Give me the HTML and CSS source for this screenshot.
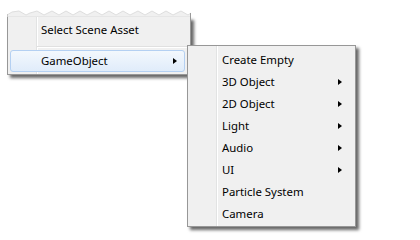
FILE: index.html
```html
<!DOCTYPE html>
<html>
<head>
<meta charset="utf-8">
<link rel="stylesheet" href="styles.css">
</head>
<body>
<div class="desk">
  <div class="menu1">
    <svg class="torn" width="184" height="7" viewBox="0 0 184 7">
      <polygon points="0,7 0,5 5,2 12,1 19,5 23,3 30,1 37,5 45,1 52,5 59,1 66,5 73,1 80,5 88,1 95,5 102,1 109,5 116,1 123,5 131,1 138,5 145,1 152,5 159,1 166,5 174,1 181,5 184,3 184,7" fill="#f0f0f0" stroke="#dedede" stroke-width="1"/>
      <line x1="0.5" y1="4" x2="0.5" y2="7" stroke="#c8c8c8"/>
      <line x1="183.5" y1="3" x2="183.5" y2="7" stroke="#9a9a9a"/>
    </svg>
    <div class="body1">
      <div class="item"><span class="label">Select Scene Asset</span></div>
      <div class="sep"></div>
      <div class="item hot"><span class="label">GameObject</span><span class="arrow"></span></div>
    </div>
  </div>
  <div class="menu2">
    <div class="item"><span class="label">Create Empty</span></div>
    <div class="item"><span class="label">3D Object</span><span class="arrow"></span></div>
    <div class="item"><span class="label">2D Object</span><span class="arrow"></span></div>
    <div class="item"><span class="label">Light</span><span class="arrow"></span></div>
    <div class="item"><span class="label">Audio</span><span class="arrow"></span></div>
    <div class="item"><span class="label">UI</span><span class="arrow"></span></div>
    <div class="item"><span class="label">Particle System</span></div>
    <div class="item"><span class="label">Camera</span></div>
  </div>
</div>
</body>
</html>
```
FILE: styles.css
```css
html, body {
  margin: 0;
  padding: 0;
  background: #ffffff;
  width: 420px;
  height: 240px;
  overflow: hidden;
}
.desk {
  position: relative;
  width: 420px;
  height: 240px;
  padding: 10px 0 0 7px;
  box-sizing: border-box;
  font-family: "Noto Sans", "Open Sans", sans-serif;
  font-size: 11.4px;
  color: #000;
}
.menu1 {
  width: 184px;
  display: flex;
  flex-direction: column;
}
.torn {
  display: block;
}
.body1 {
  background: #f0f0f0 linear-gradient(to right, transparent 28px, #e2e3e3 28px, #e2e3e3 29px, #ffffff 29px, #ffffff 30px, transparent 30px);
  border: 1px solid #979797;
  border-top: none;
  padding: 2px 2px 2px 2px;
  box-shadow: 3px 3px 3px rgba(0,0,0,0.6);
}
.menu2 {
  position: absolute;
  left: 187px;
  top: 45px;
  width: 169px;
  box-sizing: border-box;
  background: #f0f0f0 linear-gradient(to right, transparent 28px, #e2e3e3 28px, #e2e3e3 29px, #ffffff 29px, #ffffff 30px, transparent 30px);
  border: 1px solid #979797;
  padding: 3px 2px 1px 2px;
  box-shadow: 3px 3px 3px rgba(0,0,0,0.6);
}
.item {
  height: 22px;
  display: flex;
  align-items: center;
  justify-content: space-between;
  box-sizing: border-box;
  padding: 0 10px 0 30px;
  border: 1px solid transparent;
  border-radius: 3px;
}
.menu2 .item {
  padding-left: 31px;
}
.label {
  line-height: 20px;
}
.hot {
  background: linear-gradient(#f3f8fd, #e0ecfa);
  border-color: #b4d0f2;
  margin-right: 3px;
  padding-right: 7px;
}
.arrow {
  width: 0;
  height: 0;
  border-top: 3.5px solid transparent;
  border-bottom: 3.5px solid transparent;
  border-left: 4px solid #000;
}
.sep {
  height: 1px;
  margin: 5px 0 2px 27px;
  background: #e0e0e0;
  border-bottom: 1px solid #fff;
}
```
